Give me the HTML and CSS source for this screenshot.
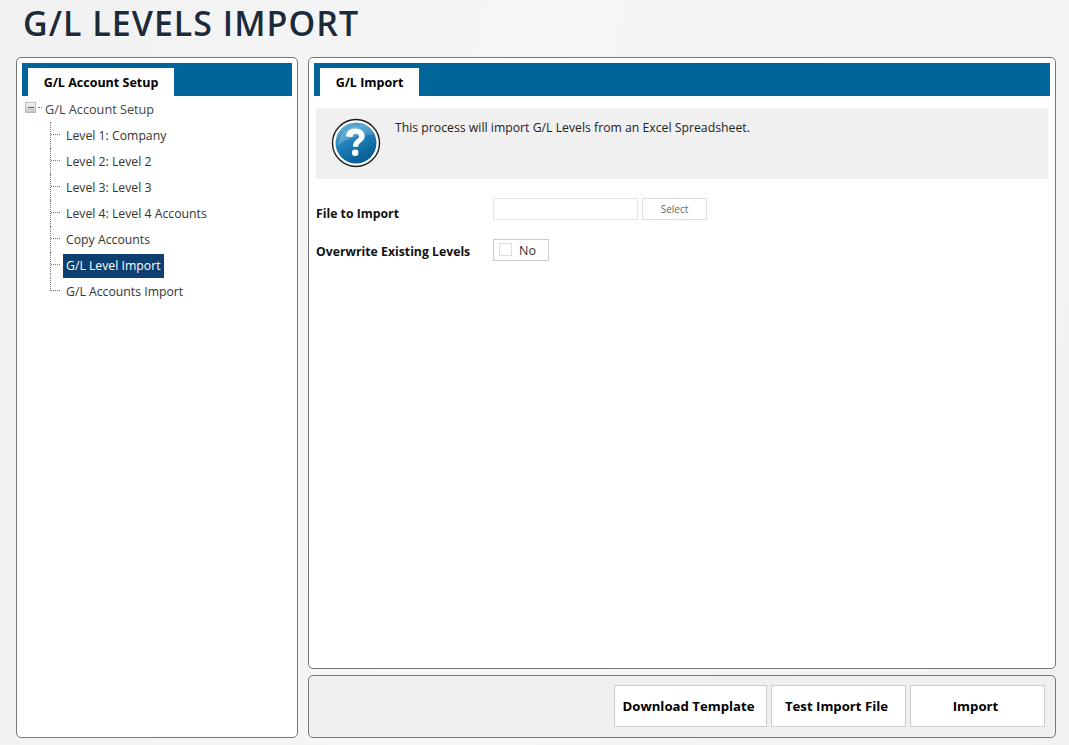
FILE: index.html
```html
<!DOCTYPE html>
<html lang="en">
<head>
  <meta charset="UTF-8">
  <meta name="viewport" content="width=device-width, initial-scale=1.0">
  <title>G/L Levels Import</title>
  <link rel="stylesheet" href="styles.css">
</head>
<body>
  <h1 class="page-title">G/L LEVELS IMPORT</h1>
  <div class="layout">
    <div class="panel side">
      <div class="tabbar"><div class="tab side-tab">G/L Account Setup</div></div>
      <div class="tree-root">
        <span class="toggle"><span class="minus"></span></span>
        <span class="root-dots"></span>
        <span class="tree-text">G/L Account Setup</span>
      </div>
      <ul class="tree">
        <li><span class="tree-text">Level 1: Company</span></li>
        <li><span class="tree-text">Level 2: Level 2</span></li>
        <li><span class="tree-text">Level 3: Level 3</span></li>
        <li><span class="tree-text">Level 4: Level 4 Accounts</span></li>
        <li><span class="tree-text">Copy Accounts</span></li>
        <li class="selected"><span class="tree-text">G/L Level Import</span></li>
        <li><span class="tree-text">G/L Accounts Import</span></li>
      </ul>
    </div>
    <div class="main">
      <div class="panel content">
        <div class="tabbar"><div class="tab main-tab">G/L Import</div></div>
        <div class="info">
          <svg class="info-icon" width="50" height="50" viewBox="0 0 50 50">
            <defs>
              <linearGradient id="ball" x1="0.2" y1="0" x2="0.7" y2="1">
                <stop offset="0" stop-color="#6db2dc"/>
                <stop offset="0.45" stop-color="#1f7fb8"/>
                <stop offset="1" stop-color="#04598f"/>
              </linearGradient>
            </defs>
            <circle cx="25" cy="25" r="23.5" fill="#fff" stroke="#1a1a1a" stroke-width="1.4"/>
            <circle cx="25" cy="25" r="20.5" fill="url(#ball)"/>
            <path d="M7 27C9 13 20 6 33 7c5 2 9 6 10 10C30 16 17 20 7 27z" fill="#fff" opacity="0.18"/>
            <g transform="translate(-1 -1)">
              <path d="M16 19.500c0-5.500 4.500-8 9.500-8 5.500 0 9.200 3.200 9.200 7.500 0 3.200-1.900 4.900-4 6.400-1.800 1.300-2.500 2.200-2.500 4.300h-5.200c0-3.700 1.200-5.400 3.500-7 1.500-1.100 2.500-2 2.500-3.400 0-1.600-1.300-2.600-3.200-2.600-2.100 0-3.300 1.300-3.400 3.400z" fill="#fff"/>
              <circle cx="25.200" cy="35.800" r="3.300" fill="#fff"/>
            </g>
          </svg>
          <p class="info-text">This process will import G/L Levels from an Excel Spreadsheet.</p>
        </div>
        <div class="form-row file-row">
          <label class="form-label">File to Import</label>
          <input class="file-input" type="text">
          <button class="select-btn" type="button">Select</button>
        </div>
        <div class="form-row overwrite-row">
          <label class="form-label">Overwrite Existing Levels</label>
          <div class="check-box"><span class="check"></span>No</div>
        </div>
      </div>
      <div class="panel actions">
        <button class="action-btn download" type="button">Download Template</button>
        <button class="action-btn test" type="button">Test Import File</button>
        <button class="action-btn import" type="button">Import</button>
      </div>
    </div>
  </div>
</body>
</html>
```

FILE: styles.css
```css
* {
  box-sizing: border-box;
}
html, body {
  height: 100%;
}
body {
  margin: 0;
  padding: 0 13px 7px 16px;
  font-family: "Open Sans", "Noto Sans", Arial, sans-serif;
  font-size: 12.25px;
  color: #333;
  background: linear-gradient(100deg, #f1f1f1, #f6f6f6 45%, #f2f2f2);
  display: flex;
  flex-direction: column;
  overflow: hidden;
}
.page-title {
  margin: 0;
  padding: 2px 0 0 7px;
  height: 57px;
  font-size: 34px;
  line-height: 42px;
  font-weight: 600;
  letter-spacing: 1px;
  color: #1c2b3c;
  text-shadow: 1px 1px 1px #fff;
}
.layout {
  flex: 1;
  display: flex;
  gap: 10px;
  min-height: 0;
}
.panel {
  background: #fff;
  border: 1px solid #777;
  border-radius: 5px;
}
.side {
  width: 282px;
  padding: 5px;
}
.main {
  flex: 1;
  display: flex;
  flex-direction: column;
  gap: 6px;
}
.content {
  flex: 1;
  padding: 5px;
}
.tabbar {
  height: 33px;
  padding: 5px 0 0 6px;
  background: #006699;
}
.tab {
  height: 28px;
  background: #fff;
  color: #000;
  font-weight: 700;
  font-size: 12.5px;
  line-height: 29px;
  text-align: center;
}
.side-tab {
  width: 146px;
}
.main-tab {
  width: 99px;
}

/* tree */
.tree-root {
  display: flex;
  align-items: center;
  height: 26px;
  padding-left: 3px;
}
.toggle {
  width: 11px;
  height: 11px;
  margin-top: -3px;
  border: 1px solid #bbb;
  background: linear-gradient(#f6f6f6, #c4c4c4);
  display: flex;
  align-items: center;
  justify-content: center;
}
.minus {
  width: 6px;
  height: 1px;
  background: #666;
}
.root-dots {
  width: 4px;
  margin: -3px 0 0 2px;
  border-top: 1px dotted #777;
}
.tree-text {
  padding: 0 3px;
  line-height: 24px;
  display: inline-block;
}
.tree-root .tree-text {
  margin-left: 3px;
  padding: 0;
  color: #444;
  font-size: 12.7px;
}
.tree {
  list-style: none;
  margin: 0;
  padding: 0 0 0 28px;
}
.tree li {
  position: relative;
  height: 26px;
  padding: 2px 0 0 13px;
  display: flex;
  align-items: center;
}
.tree li::before {
  content: "";
  position: absolute;
  left: 0;
  top: 0;
  height: 26px;
  width: 10px;
  border-left: 1px dotted #777;
}
.tree li::after {
  content: "";
  position: absolute;
  left: 1px;
  top: 12px;
  width: 9px;
  border-top: 1px dotted #777;
}
.tree li:last-child::before {
  height: 13px;
}
.selected .tree-text {
  background: #0d3f70;
  color: #fff;
}

/* info box */
.info {
  margin: 12px 2px 0;
  height: 71px;
  padding: 10px 15px;
  background: #f0f0f0;
  display: flex;
  gap: 14px;
}
.info-icon {
  flex: none;
}
.info-text {
  margin: 0;
  color: #222;
  line-height: 20px;
}

/* form */
.form-row {
  display: flex;
  align-items: flex-start;
  padding-left: 2px;
}
.file-row {
  margin-top: 19px;
  height: 22px;
}
.overwrite-row {
  margin-top: 19px;
}
.form-label {
  width: 177px;
  font-weight: 700;
  color: #111;
  line-height: 32px;
}
.overwrite-row .form-label {
  line-height: 26px;
}
.file-input {
  width: 145px;
  height: 22px;
  border: 1px solid #e2e2ea;
  background: #fff;
}
.select-btn {
  width: 65px;
  height: 22px;
  margin-left: 4px;
  border: 1px solid #ddd;
  background: #fff;
  font-family: inherit;
  font-size: 10px;
  color: #666;
  padding: 0;
}
.check-box {
  width: 56px;
  height: 22px;
  border: 1px solid #ccc;
  display: flex;
  align-items: center;
  padding-left: 5px;
  gap: 7px;
  font-size: 12.5px;
}
.check {
  width: 13px;
  height: 13px;
  border: 1px solid #ddd;
  margin-top: -1px;
}

/* bottom buttons */
.actions {
  height: 63px;
  background: #f0f0f0;
  display: flex;
  justify-content: flex-end;
  align-items: center;
  gap: 4px;
  padding: 0 10px 2px 0;
}
.action-btn {
  height: 42px;
  background: #fff;
  border: 1px solid #ccc;
  font-family: inherit;
  font-size: 13.2px;
  font-weight: 700;
  color: #000;
  padding: 0 4px 0 0;
}
.download {
  width: 153px;
}
.test {
  width: 135px;
}
.import {
  width: 135px;
}
```
